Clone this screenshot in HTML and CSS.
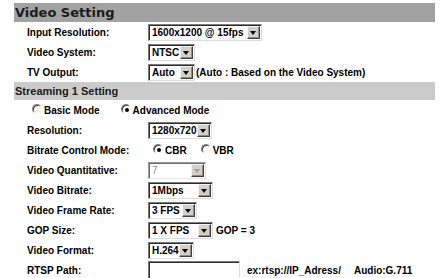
FILE: index.html
```html
<!DOCTYPE html>
<html lang="en">
<head>
  <meta charset="UTF-8" />
  <title>Video Setting</title>
  <link rel="stylesheet" href="styles.css">
</head>
<body>
  <div class="panel">
    <div class="head head-main">Video Setting</div>

    <div class="row">
      <div class="label">Input Resolution:</div>
      <div class="value">
        <span class="sel w-res"><span class="txt">1600x1200 @ 15fps</span><span class="arrow"></span></span>
      </div>
    </div>
    <div class="row">
      <div class="label">Video System:</div>
      <div class="value">
        <span class="sel w-ntsc"><span class="txt">NTSC</span><span class="arrow"></span></span>
      </div>
    </div>
    <div class="row">
      <div class="label">TV Output:</div>
      <div class="value">
        <span class="sel w-auto"><span class="txt">Auto</span><span class="arrow"></span></span>
        <span class="note tight">(Auto : Based on the Video System)</span>
      </div>
    </div>

    <div class="head head-sub">Streaming 1 Setting</div>

    <div class="row modes">
      <label class="opt"><span class="radio"></span>Basic Mode</label>
      <label class="opt"><span class="radio on"></span>Advanced Mode</label>
    </div>
    <div class="row">
      <div class="label">Resolution:</div>
      <div class="value">
        <span class="sel w-720"><span class="txt">1280x720</span><span class="arrow"></span></span>
      </div>
    </div>
    <div class="row">
      <div class="label">Bitrate Control Mode:</div>
      <div class="value rates">
        <label class="opt"><span class="radio on"></span>CBR</label>
        <label class="opt"><span class="radio"></span>VBR</label>
      </div>
    </div>
    <div class="row">
      <div class="label">Video Quantitative:</div>
      <div class="value">
        <span class="sel w-q off"><span class="txt">7</span><span class="arrow"></span></span>
      </div>
    </div>
    <div class="row">
      <div class="label">Video Bitrate:</div>
      <div class="value">
        <span class="sel w-wide"><span class="txt">1Mbps</span><span class="arrow"></span></span>
      </div>
    </div>
    <div class="row">
      <div class="label">Video Frame Rate:</div>
      <div class="value">
        <span class="sel w-fps"><span class="txt">3 FPS</span><span class="arrow"></span></span>
      </div>
    </div>
    <div class="row">
      <div class="label">GOP Size:</div>
      <div class="value">
        <span class="sel w-wide"><span class="txt">1 X FPS</span><span class="arrow"></span></span>
        <span class="note">GOP = 3</span>
      </div>
    </div>
    <div class="row">
      <div class="label">Video Format:</div>
      <div class="value">
        <span class="sel w-fmt"><span class="txt">H.264</span><span class="arrow"></span></span>
      </div>
    </div>
    <div class="row">
      <div class="label">RTSP Path:</div>
      <div class="value">
        <input type="text" class="field" />
        <span class="note hint">ex:rtsp://IP_Adress/</span>
        <span class="note">Audio:G.711</span>
      </div>
    </div>
  </div>
</body>
</html>
```

FILE: styles.css
```css
* {
  margin: 0;
  padding: 0;
  box-sizing: border-box;
}

body {
  font-family: 'Liberation Sans', Arial, sans-serif;
  font-size: 10px;
  font-weight: bold;
  color: #000;
  background: #fff;
  padding: 3px 0 0 14px;
}

.panel {
  width: 421px;
}

.head {
  color: #1c1c1c;
  padding-left: 1px;
}

.head-main {
  height: 19px;
  line-height: 19px;
  background: #a2a2a2;
  font-family: 'DejaVu Sans', Verdana, sans-serif;
  font-size: 13px;
}

.head-sub {
  height: 18px;
  line-height: 18px;
  background: #cbcbcb;
  font-size: 11px;
}

.row {
  display: flex;
  align-items: center;
  height: 20px;
}

.label {
  width: 134px;
  padding-left: 13px;
}

.value {
  display: flex;
  align-items: center;
}

/* drop-down boxes */
.sel {
  display: inline-flex;
  align-items: center;
  height: 17px;
  border: 1px solid;
  border-color: #7c7c7c #dcdcdc #dcdcdc #7c7c7c;
  box-shadow: inset 1px 1px #2c2c2c;
  background: #fff;
  padding: 1px 1px 0 3px;
}

.sel .txt {
  flex: 1;
  min-width: 0;
  white-space: nowrap;
}

.sel .arrow {
  position: relative;
  flex-shrink: 0;
  width: 13px;
  height: 13px;
  background: #d4d0c8;
  border: 1px solid;
  border-color: #f4f4f4 #404040 #404040 #f4f4f4;
  box-shadow: inset -1px -1px #8c8c8c;
}

.sel .arrow::after {
  content: "";
  position: absolute;
  left: 2px;
  top: 4px;
  border-left: 3.5px solid transparent;
  border-right: 3.5px solid transparent;
  border-top: 4px solid #000;
}

.sel.off {
  border-color: #9c9c9c #e4e4e4 #e4e4e4 #9c9c9c;
  box-shadow: inset 1px 1px #6a6a6a;
}

.sel.off .txt {
  color: #8c8c8c;
  font-weight: normal;
}

.sel.off .arrow::after {
  border-top-color: #a0a0a0;
}

.w-res { width: 114px; }
.w-ntsc { width: 47px; }
.w-auto { width: 47px; }
.w-720 { width: 64px; }
.w-q { width: 58px; }
.w-wide { width: 65px; }
.w-fps { width: 49px; }
.w-fmt { width: 46px; }

.field {
  width: 92px;
  height: 18px;
  border: 1px solid;
  border-color: #7c7c7c #dcdcdc #dcdcdc #7c7c7c;
  box-shadow: inset 1px 1px #2c2c2c;
  background: #fff;
}

.note {
  margin-left: 3px;
  white-space: nowrap;
}

.note.tight {
  margin-left: 1px;
}

.note.hint {
  margin-left: 7px;
  margin-right: 10px;
}

/* radio buttons */
.opt {
  display: inline-flex;
  align-items: center;
}

.radio {
  position: relative;
  width: 10px;
  height: 10px;
  margin-right: 2px;
  margin-top: -3px;
  border-radius: 50%;
  border: 1px solid;
  border-color: #808080 #f0f0f0 #f0f0f0 #808080;
  box-shadow: inset 1px 1px #404040;
  background: #fff;
}

.radio.on::after {
  content: "";
  position: absolute;
  left: 3px;
  top: 3px;
  width: 4px;
  height: 4px;
  border-radius: 50%;
  background: #000;
}

.modes {
  padding-left: 18px;
}

.modes .opt + .opt {
  margin-left: 21px;
}

.rates .opt {
  margin-left: 5px;
}

.rates .opt + .opt {
  margin-left: 14px;
}
```
